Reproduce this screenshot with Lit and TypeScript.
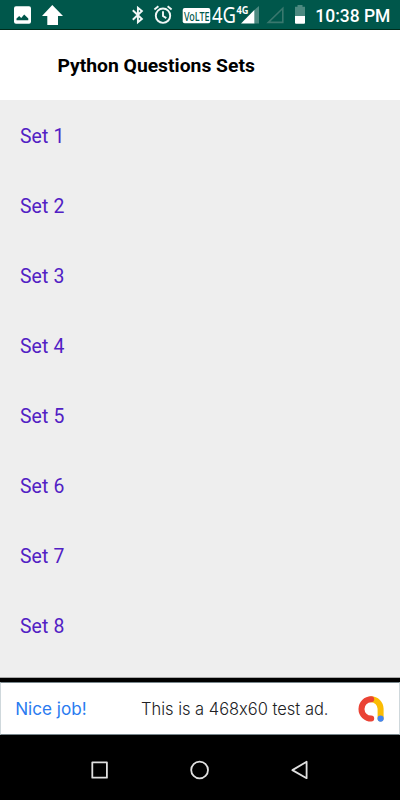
import { LitElement, html, css, svg } from "lit";
import { customElement } from "lit/decorators.js";

const SANS = css`Roboto, "Noto Sans", sans-serif`;

@customElement("status-bar")
class StatusBar extends LitElement {
  static styles = css`
    :host { display: block; height: 30px; background: #00574b; box-sizing: border-box; border-bottom: 1px solid #002d1c; }
    svg { display: block; }
    text { font-family: ${SANS}; fill: #fff; }
    .time { font-size: 18px; font-weight: 500; }
    .net { font-family: "Noto Sans", sans-serif; font-size: 22px; font-weight: 400; }
    .small { font-family: "Noto Sans", sans-serif; font-size: 11px; font-weight: 700; }
    .volte { font-family: "Noto Sans", sans-serif; font-size: 13px; font-weight: 500; fill: #00574b; }
    .line { fill: none; stroke: #f2f8f7; stroke-width: 1.9; }
  `;
  render() {
    return html`<svg width="400" height="29" viewBox="0 0 400 29">
      <rect x="14" y="6.3" width="17" height="17.4" rx="2" fill="#fff" />
      <path d="M16.5 20.2V18.5L19.2 16 21.2 18 24.2 14.5 28.3 18.6V20.2Z" fill="#00574b" />
      <path d="M52.3 5 63 16H58V25H47.3V16H42Z" fill="#fff" />
      <path class="line" d="M132.8 10.2 141.9 19 137.9 22.3V7.7L141.9 11 132.8 19.8" />
      <circle class="line" cx="163" cy="15.7" r="7.2" />
      <path class="line" d="M163 11.3V16L166.3 18.1M154.4 9.4 158.4 6.2M171.6 9.4 167.6 6.2" />
      <rect x="182.7" y="8" width="27.6" height="15.3" rx="2" fill="#fff" />
      <text class="volte" x="184" y="20.5" textLength="25.5" lengthAdjust="spacingAndGlyphs">VoLTE</text>
      <text class="net" x="212" y="23.2" textLength="24" lengthAdjust="spacingAndGlyphs">4G</text>
      <text class="small" x="236.4" y="13.6" textLength="12" lengthAdjust="spacingAndGlyphs">4G</text>
      <path d="M254 10.2 259 6V23.5H254Z" fill="#4c8980" />
      <path d="M254.3 10V23.5H241Z" fill="#fff" />
      <path d="M282.8 8.3V22.4H268.3Z" fill="none" stroke="#39786e" stroke-width="1.6" />
      <path d="M297.5 5H302.5V6.8H305V17H295V6.8H297.5Z" fill="#4c8980" />
      <path d="M295 16H305V22.7Q305 23.8 304 23.8H296Q295 23.8 295 22.7Z" fill="#fff" />
      <text class="time" x="315.3" y="22" textLength="75" lengthAdjust="spacingAndGlyphs">10:38 PM</text>
    </svg>`;
  }
}

@customElement("ad-banner")
class AdBanner extends LitElement {
  static styles = css`
    :host {
      display: flex; align-items: center; box-sizing: border-box; height: 53px;
      padding: 0 14px 0 15px; background: #fff; border: 1px solid #cfd8dc; border-bottom-color: #78868c; border-top-color: #78868c;
    }
    svg { display: block; flex: none; }
    text { font-family: Inter, ${SANS}; font-size: 17px; font-feature-settings: "calt" 0; }
    .praise { fill: #2a7bf0; font-weight: 400; }
    .copy { fill: #202124; font-weight: 350; }
    .logo { margin-left: auto; }
    .arc { fill: none; stroke-width: 6; stroke-linecap: round; }
  `;
  render() {
    return html`<svg width="325" height="50" viewBox="16 683 325 50">
        <text class="praise" x="15.2" y="713.8" textLength="71.5" lengthAdjust="spacingAndGlyphs">Nice job!</text>
        <text class="copy" x="141" y="713.8" textLength="187.5" lengthAdjust="spacingAndGlyphs">This is a 468x60 test ad.</text>
      </svg>
      <svg class="logo" width="28" height="28" viewBox="357 694.5 28 28">
        <path class="arc" stroke="#fbbc04" d="M371 698.7A9.6 9.6 0 0 1 380.6 708.3V718" />
        <path class="arc" stroke="#ea4335" d="M371.2 698.7A9.7 9.7 0 1 0 371.2 718.1" />
        <circle cx="380.6" cy="718.1" r="3.1" fill="#4285f4" />
      </svg>`;
  }
}

@customElement("nav-keys")
class NavKeys extends LitElement {
  static styles = css`
    :host { display: block; height: 65px; background: #000; }
    svg { display: block; }
    .key { fill: none; stroke: #e0e0e0; stroke-width: 1.8; stroke-linejoin: round; }
  `;
  render() {
    return html`<svg width="400" height="65" viewBox="0 735 400 65">
      <rect class="key" x="92.3" y="762.3" width="14.6" height="15.4" />
      <circle class="key" cx="199.6" cy="770" r="8.4" />
      <path class="key" d="M306.6 761.8V778.2L292.4 770.1Z" />
    </svg>`;
  }
}

@customElement("app-root")
class AppRoot extends LitElement {
  static styles = css`
    :host { display: flex; flex-direction: column; height: 800px; width: 400px; overflow: hidden; background: #000; font-family: ${SANS}; }
    header { box-sizing: border-box; height: 70px; padding: 1px 0 0 57px; display: flex; align-items: center; background: #fff; }
    h1 { margin: 0; }
    svg { display: block; overflow: visible; }
    .list { box-sizing: border-box; height: 578px; overflow: hidden; background: #eee; border-bottom: 1px solid #aaa; margin-bottom: 4px; }
    .item { display: flex; align-items: center; box-sizing: border-box; height: 70px; padding: 0 20px; color: #5120c4; }
    text { fill: currentColor; font-size: 19.4px; }
    .title { font-size: 19px; font-weight: 700; }
  `;
  private sets = Array.from({ length: 8 }, (_, i) => `Set ${i + 1}`);

  render() {
    return html`
      <status-bar></status-bar>
      <header>
        <h1><svg width="198" height="24"><text class="title" x="0.4" y="18.4" textLength="197.5" lengthAdjust="spacingAndGlyphs">Python Questions Sets</text></svg></h1>
      </header>
      <div class="list">
        ${this.sets.map((name) => html`<div class="item">
          <svg width="44" height="24">${svg`<text x="0" y="20" textLength="44.3">${name}</text>`}</svg>
        </div>`)}
      </div>
      <ad-banner></ad-banner>
      <nav-keys></nav-keys>`;
  }
}
